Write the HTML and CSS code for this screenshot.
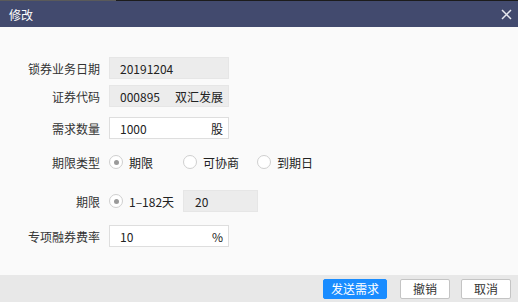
FILE: index.html
```html
<!DOCTYPE html>
<html lang="zh-CN">
<head>
    <meta charset="UTF-8">
    <title>修改</title>
    <link rel="stylesheet" href="styles.css">
</head>
<body>
    <div class="dialog">
        <div class="topline"></div>
        <div class="titlebar">
            <span class="title">修改</span>
            <span class="close">
                <svg width="11" height="11" viewBox="0 0 11 11">
                    <path d="M1 1 L10 10 M10 1 L1 10" stroke="#e6e8ef" stroke-width="1.5" fill="none"/>
                </svg>
            </span>
        </div>
        <div class="content">
            <div class="row row-1">
                <label class="label">锁券业务日期</label>
                <div class="field disabled"><span>20191204</span></div>
            </div>
            <div class="row row-2">
                <label class="label">证券代码</label>
                <div class="field disabled"><span>000895</span><span class="unit">双汇发展</span></div>
            </div>
            <div class="row row-3">
                <label class="label">需求数量</label>
                <div class="field"><span>1000</span><span class="unit">股</span></div>
            </div>
            <div class="row row-4">
                <label class="label">期限类型</label>
                <div class="option"><span class="radio checked"></span>期限</div>
                <div class="option"><span class="radio"></span>可协商</div>
                <div class="option"><span class="radio"></span>到期日</div>
            </div>
            <div class="row row-5">
                <label class="label">期限</label>
                <div class="option"><span class="radio checked"></span>1–182天</div>
                <div class="field disabled short"><span>20</span></div>
            </div>
            <div class="row row-6">
                <label class="label">专项融券费率</label>
                <div class="field"><span>10</span><span class="unit">%</span></div>
            </div>
        </div>
        <div class="footer">
            <button class="btn btn-primary">发送需求</button>
            <button class="btn">撤销</button>
            <button class="btn">取消</button>
        </div>
    </div>
</body>
</html>
```

FILE: styles.css
```css
body {
    margin: 0;
    font-family: "Noto Sans CJK SC", sans-serif;
    font-size: 12px;
    color: #333;
    background: #fafafa;
}
.dialog {
    width: 518px;
    height: 302px;
    display: flex;
    flex-direction: column;
}
.topline {
    height: 1px;
    background: linear-gradient(to right, #5a5a5a 0, #5a5a5a 116px, #1c1c1c 116px);
}
.titlebar {
    height: 26px;
    background: #424a6e;
    color: #fff;
    display: flex;
    align-items: center;
    justify-content: space-between;
    padding: 0 6px 0 9px;
}
.title {
    font-size: 12px;
}
.close {
    display: flex;
    margin-top: 1px;
}
.content {
    height: 248px;
    box-sizing: border-box;
    padding-top: 30px;
    background: #fafafa;
}
.row {
    display: flex;
    align-items: center;
    height: 22px;
}
.row-2 { margin-top: 6px; }
.row-3 { margin-top: 10px; }
.row-4 { margin-top: 12px; }
.row-5 { margin-top: 17px; }
.row-6 { margin-top: 13px; }
.label {
    width: 100px;
    text-align: right;
    margin-right: 9px;
    color: #333;
}
.field {
    width: 120px;
    height: 22px;
    box-sizing: border-box;
    border: 1px solid #dedede;
    background: #fff;
    display: flex;
    align-items: center;
    justify-content: space-between;
    padding: 0 5px 0 10px;
    color: #222;
}
.field.disabled {
    background: #ececec;
    border-color: #e6e6e6;
}
.field.short {
    width: 75px;
    padding-left: 11px;
}
.option {
    width: 74px;
    display: flex;
    align-items: center;
    color: #222;
}
.radio {
    width: 14px;
    height: 14px;
    box-sizing: border-box;
    border: 1px solid #cfcfcf;
    border-radius: 50%;
    background: #fff;
    margin-right: 6px;
    display: flex;
    align-items: center;
    justify-content: center;
}
.radio.checked::after {
    content: "";
    width: 5px;
    height: 5px;
    border-radius: 50%;
    background: #9a9a9a;
}
.footer {
    flex: 1;
    background: #e8e8e8;
    display: flex;
    justify-content: flex-end;
    align-items: center;
    gap: 11px;
    padding-right: 7px;
}
.btn {
    height: 20px;
    width: 50px;
    padding: 0;
    font-family: inherit;
    font-size: 12px;
    color: #333;
    background: #fff;
    border: 1px solid #c4c4c4;
    border-radius: 2px;
}
.btn-primary {
    width: 64px;
    margin-right: 2px;
    background: #198cff;
    border-color: #198cff;
    color: #fff;
}
```
